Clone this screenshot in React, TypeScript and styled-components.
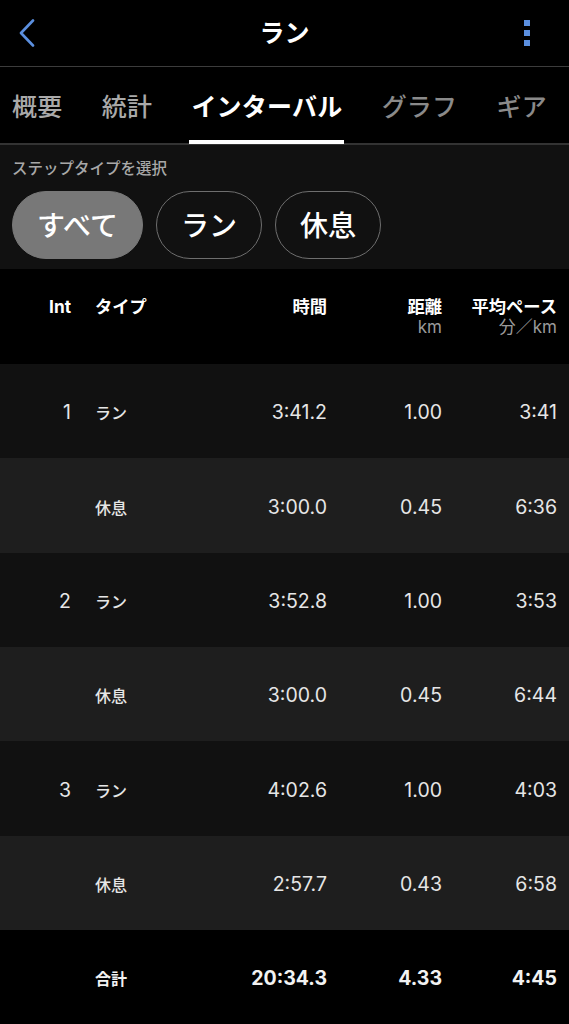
import React from "react";
import styled, { createGlobalStyle } from "styled-components";

const GlobalStyle = createGlobalStyle`
  html, body {
    margin: 0;
    padding: 0;
    background: #000;
  }
  body {
    font-family: "Inter", "Noto Sans CJK JP", sans-serif;
    color: #fff;
  }
  * { box-sizing: border-box; }
`;

const Page = styled.div`
  width: 569px;
  height: 1024px;
  background: #000;
  overflow: hidden;
  display: flex;
  flex-direction: column;
`;

const Header = styled.header`
  height: 68px;
  border-bottom: 1px solid #3c3c3c;
  display: grid;
  grid-template-columns: 60px 1fr 60px;
  align-items: center;
`;

const IconButton = styled.div<{ $align: "start" | "end" }>`
  display: flex;
  justify-content: ${(p) => (p.$align === "start" ? "flex-start" : "flex-end")};
  padding: ${(p) => (p.$align === "start" ? "0 0 0 18px" : "0 38px 0 0")};
  align-items: center;
  height: 100%;
`;

const Title = styled.h1`
  margin: 0;
  text-align: center;
  font-size: 25px;
  font-weight: 700;
  color: #fff;
  font-family: "Noto Sans CJK JP", sans-serif;
  padding-bottom: 4px;
`;

const TabBar = styled.nav`
  height: 79px;
  border-bottom: 2px solid #333;
  display: flex;
  justify-content: space-between;
  align-items: stretch;
  padding: 0 22px 0 12px;
`;

const Tab = styled.div<{ $active?: boolean; $tone?: "light" | "dim" }>`
  position: relative;
  display: flex;
  align-items: center;
  padding-top: 0px;
  font-family: "Noto Sans CJK JP", sans-serif;
  font-size: 25px;
  font-weight: ${(p) => (p.$active ? 700 : 500)};
  color: ${(p) => (p.$active ? "#fff" : p.$tone === "dim" ? "#8a8a8a" : "#a9a9a9")};
  letter-spacing: 0.2px;
`;

const TabUnderline = styled.span`
  position: absolute;
  left: -2px;
  right: -2px;
  bottom: -1px;
  height: 4px;
  background: #fff;
`;

const FilterSection = styled.section`
  background: #111;
  padding: 12px 12px 10px;
  display: flex;
  flex-direction: column;
  gap: 14px;
`;

const FilterLabel = styled.div`
  font-family: "Noto Sans CJK JP", sans-serif;
  font-size: 15.5px;
  line-height: 20px;
  color: #a8a8a8;
  font-weight: 500;
`;

const ChipRow = styled.div`
  display: flex;
  gap: 13px;
`;

const Chip = styled.div<{ $selected?: boolean }>`
  height: 68px;
  padding: 0 24px 3px;
  border-radius: 34px;
  display: flex;
  align-items: center;
  justify-content: center;
  font-family: "Noto Sans CJK JP", sans-serif;
  font-size: 28px;
  font-weight: 500;
  color: #fff;
  background: ${(p) => (p.$selected ? "#787878" : "transparent")};
  border: 1.5px solid ${(p) => (p.$selected ? "#787878" : "#6e6e6e")};
`;

const Table = styled.div`
  display: flex;
  flex-direction: column;
`;

const Row = styled.div<{ $bg: string; $h: number; $head?: boolean }>`
  display: grid;
  grid-template-columns: 71px 146px 110px 115px 115px;
  padding-right: 12px;
  height: ${(p) => p.$h}px;
  background: ${(p) => p.$bg};
  align-items: ${(p) => (p.$head ? "start" : "center")};
  padding-top: ${(p) => (p.$head ? "28px" : "2px")};
`;

const Cell = styled.div<{ $align?: "left" | "right"; $bold?: boolean; $pad?: number }>`
  padding-left: ${(p) => p.$pad ?? 0}px;
  font-size: 19.5px;
  font-weight: ${(p) => (p.$bold ? 700 : 400)};
  color: ${(p) => (p.$bold ? "#f2f2f2" : "#e6e6e6")};
  font-family: "Inter", "Noto Sans CJK JP", sans-serif;
  white-space: nowrap;
  display: flex;
  flex-direction: column;
  align-items: ${(p) => (p.$align === "left" ? "flex-start" : "flex-end")};
`;

const TypeText = styled.span<{ $bold?: boolean }>`
  font-family: "Noto Sans CJK JP", sans-serif;
  font-size: 16px;
  font-weight: ${(p) => (p.$bold ? 700 : 500)};
`;

const HeadText = styled.span`
  font-family: "Inter", "Noto Sans CJK JP", sans-serif;
  font-size: 17.3px;
  font-weight: 700;
  color: #fff;
  line-height: 20px;
`;

const UnitText = styled.span`
  font-family: "Inter", "Noto Sans CJK JP", sans-serif;
  font-size: 17px;
  font-weight: 400;
  color: #9a9a9a;
  line-height: 21px;
`;

type Step = { int?: string; type: string; time: string; dist: string; pace: string };

const steps: Step[] = [
  { int: "1", type: "ラン", time: "3:41.2", dist: "1.00", pace: "3:41" },
  { type: "休息", time: "3:00.0", dist: "0.45", pace: "6:36" },
  { int: "2", type: "ラン", time: "3:52.8", dist: "1.00", pace: "3:53" },
  { type: "休息", time: "3:00.0", dist: "0.45", pace: "6:44" },
  { int: "3", type: "ラン", time: "4:02.6", dist: "1.00", pace: "4:03" },
  { type: "休息", time: "2:57.7", dist: "0.43", pace: "6:58" },
];

const BackIcon = () => (
  <svg width="18" height="28" viewBox="0 0 18 28" fill="none">
    <path d="M15 1.5 L3 14 L15 26.5" stroke="#5b8fdf" strokeWidth="2.6" strokeLinecap="round" strokeLinejoin="round" />
  </svg>
);

const MoreIcon = () => (
  <svg width="8" height="28" viewBox="0 0 8 28">
    <rect x="1" y="1" width="6" height="6" fill="#5b8fdf" />
    <rect x="1" y="11" width="6" height="6" fill="#5b8fdf" />
    <rect x="1" y="21" width="6" height="6" fill="#5b8fdf" />
  </svg>
);

export default function App() {
  return (
    <>
      <GlobalStyle />
      <Page>
        <Header>
          <IconButton $align="start">
            <BackIcon />
          </IconButton>
          <Title>ラン</Title>
          <IconButton $align="end">
            <MoreIcon />
          </IconButton>
        </Header>

        <TabBar>
          <Tab $tone="light">概要</Tab>
          <Tab $tone="light">統計</Tab>
          <Tab $active>
            インターバル
            <TabUnderline />
          </Tab>
          <Tab $tone="dim">グラフ</Tab>
          <Tab $tone="dim">ギア</Tab>
        </TabBar>

        <FilterSection>
          <FilterLabel>ステップタイプを選択</FilterLabel>
          <ChipRow>
            <Chip $selected>すべて</Chip>
            <Chip>ラン</Chip>
            <Chip>休息</Chip>
          </ChipRow>
        </FilterSection>

        <Table>
          <Row $bg="#000" $h={95} $head>
            <Cell><HeadText>Int</HeadText></Cell>
            <Cell $align="left" $pad={24}><HeadText>タイプ</HeadText></Cell>
            <Cell><HeadText>時間</HeadText></Cell>
            <Cell>
              <HeadText>距離</HeadText>
              <UnitText>km</UnitText>
            </Cell>
            <Cell>
              <HeadText>平均ペース</HeadText>
              <UnitText>分／km</UnitText>
            </Cell>
          </Row>
          {steps.map((s, i) => (
            <Row key={i} $bg={i % 2 === 0 ? "#111" : "#1e1e1e"} $h={94.33}>
              <Cell>{s.int ?? ""}</Cell>
              <Cell $align="left" $pad={24}><TypeText>{s.type}</TypeText></Cell>
              <Cell>{s.time}</Cell>
              <Cell>{s.dist}</Cell>
              <Cell>{s.pace}</Cell>
            </Row>
          ))}
          <Row $bg="#000" $h={94}>
            <Cell $bold></Cell>
            <Cell $align="left" $pad={24} $bold><TypeText $bold>合計</TypeText></Cell>
            <Cell $bold>20:34.3</Cell>
            <Cell $bold>4.33</Cell>
            <Cell $bold>4:45</Cell>
          </Row>
        </Table>
      </Page>
    </>
  );
}
